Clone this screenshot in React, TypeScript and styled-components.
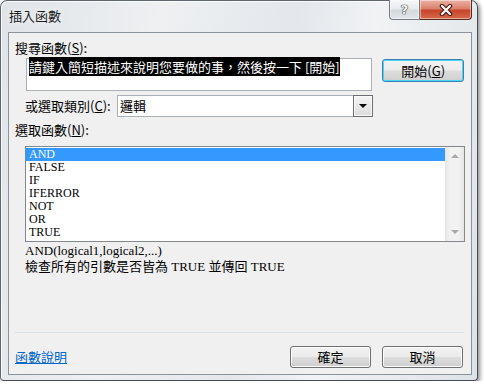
import React from "react";
import styled, { createGlobalStyle } from "styled-components";

const GlobalStyle = createGlobalStyle`
  html, body {
    margin: 0;
    padding: 0;
    background: #ffffff;
  }
  body {
    font-family: "Noto Sans CJK TC", "Liberation Sans", sans-serif;
    font-size: 12px;
    color: #000;
  }
  * {
    box-sizing: border-box;
  }
`;

const Window = styled.div`
  width: 478px;
  height: 381px;
  display: flex;
  flex-direction: column;
  padding: 0 5px 5px 7px;
  border: 1px solid #5f666e;
  border-right-color: #474c52;
  border-bottom-color: #474c52;
  border-radius: 7px 7px 4px 4px;
  background: linear-gradient(100deg, #e0e4e8 0%, #eef0f2 30%, #e3e7eb 55%, #f1f3f5 70%, #dde2e6 100%);
  box-shadow: 2px 2px 4px rgba(0, 0, 0, 0.45), inset 1px 1px 0 rgba(255, 255, 255, 0.8);
`;

const TitleBar = styled.div`
  height: 31px;
  display: flex;
  justify-content: space-between;
  align-items: flex-start;
`;

const Title = styled.div`
  margin-top: 7px;
  margin-left: 1px;
  font-size: 13px;
  line-height: 16px;
  color: #1c1c1c;
  text-shadow: 0 0 6px rgba(255, 255, 255, 0.9);
`;

const Caption = styled.div`
  display: flex;
  margin-top: -1px;
`;

const CaptionButton = styled.div<{ $close?: boolean }>`
  height: 20px;
  width: ${(p) => (p.$close ? "52px" : "31px")};
  display: flex;
  align-items: center;
  justify-content: center;
  border: 1px solid ${(p) => (p.$close ? "#5a2a22" : "#737b84")};
  border-top: none;
  border-left-width: ${(p) => (p.$close ? "0" : "1px")};
  border-radius: ${(p) => (p.$close ? "0 0 4px 0" : "0 0 0 4px")};
  background: ${(p) =>
    p.$close
      ? "linear-gradient(#eab3a6 0%, #dc806b 45%, #c8442c 55%, #d66a4a 100%)"
      : "linear-gradient(#f6f7f8 0%, #e8ebee 45%, #d4d9de 55%, #e3e7ea 100%)"};
  box-shadow: inset 0 0 0 1px rgba(255, 255, 255, 0.45);
  font-family: "DejaVu Sans", sans-serif;
  font-weight: bold;
  font-size: 13px;
  color: #f2f2f2;
  text-shadow: 0 0 1px #3a3f45, 0 0 1px #3a3f45, 0 0 1px #3a3f45;
`;

const Client = styled.div`
  flex: 1;
  display: flex;
  flex-direction: column;
  border: 1px solid #8c939a;
  background: #f0f0f0;
  padding: 7px 7px 6px 6px;
`;

const SectionLabel = styled.div<{ $top?: number }>`
  margin-top: ${(p) => p.$top ?? 0}px;
  font-size: 13px;
  line-height: 16px;
  height: 16px;
`;

const SearchRow = styled.div`
  display: flex;
  align-items: flex-start;
  gap: 10px;
  margin: 2px 0 0 11px;
`;

const SearchBox = styled.div`
  width: 348px;
  height: 33px;
  background: #fff;
  border: 1px solid #abb0b8;
  padding: 1px 2px;
  font-size: 13px;
  line-height: 14px;
`;

const Selected = styled.span`
  background: #000;
  color: #fff;
`;

const Button = styled.div<{ $focused?: boolean }>`
  width: ${(p) => (p.$focused ? "82px" : "81px")};
  height: ${(p) => (p.$focused ? "23px" : "22px")};
  margin-top: ${(p) => (p.$focused ? "1px" : "0")};
  display: flex;
  align-items: center;
  justify-content: center;
  border: 1px solid ${(p) => (p.$focused ? "#3c7fb1" : "#707070")};
  border-radius: 3px;
  background: linear-gradient(#f2f2f2 0%, #ebebeb 48%, #dddddd 52%, #cfcfcf 100%);
  box-shadow: inset 0 0 0 1px ${(p) => (p.$focused ? "#48d7f8" : "#fcfcfc")};
  font-size: 13px;
  line-height: 16px;
`;

const CategoryRow = styled.div`
  display: flex;
  align-items: center;
  margin: 4px 0 0 10px;
  height: 22px;
`;

const CategoryLabel = styled.div`
  width: 92px;
  font-size: 13px;
  line-height: 16px;
`;

const Select = styled.div`
  width: 256px;
  height: 22px;
  display: flex;
  align-items: stretch;
  background: #fff;
  border: 1px solid #abb0b8;
`;

const SelectValue = styled.div`
  flex: 1;
  padding-left: 2px;
  font-size: 13px;
  line-height: 20px;
`;

const DropButton = styled.div`
  width: 20px;
  display: flex;
  align-items: center;
  justify-content: center;
  border: 1px solid #6e6e6e;
  margin: -1px -1px -1px 0;
  background: linear-gradient(#f4f4f4, #dcdcdc);
  box-shadow: inset 0 0 0 1px #fafafa;
`;

const ListBox = styled.div`
  display: flex;
  width: 440px;
  height: 96px;
  margin: 8px 0 0 10px;
  border: 1px solid #828790;
  background: #fff;
`;

const Rows = styled.div`
  flex: 1;
  padding-top: 1px;
`;

const Row = styled.div<{ $selected?: boolean }>`
  height: 13px;
  padding-left: 3px;
  font-family: "Liberation Serif", serif;
  font-size: 12px;
  line-height: 13px;
  overflow: hidden;
  background: ${(p) => (p.$selected ? "#3399ff" : "transparent")};
  color: ${(p) => (p.$selected ? "#fff" : "#000")};
`;

const ScrollBar = styled.div`
  width: 19px;
  display: flex;
  flex-direction: column;
  justify-content: space-between;
  align-items: center;
  padding: 7px 0;
  background: linear-gradient(to right, #e6e6e6, #f2f2f2 30%, #f2f2f2 70%, #e6e6e6);
`;

const Arrow = styled.div<{ $down?: boolean; $color?: string }>`
  width: 0;
  height: 0;
  border-left: 4px solid transparent;
  border-right: 4px solid transparent;
  ${(p) =>
    p.$down
      ? `border-top: 4px solid ${p.$color ?? "#a8a8a8"};`
      : `border-bottom: 4px solid ${p.$color ?? "#a8a8a8"};`}
`;

const Description = styled.div`
  margin: 1px 0 0 10px;
  font-family: "Liberation Serif", "Noto Sans CJK TC", serif;
  font-size: 13px;
  line-height: 16px;
`;

const Spacer = styled.div`
  flex: 1;
`;

const Separator = styled.div`
  height: 1px;
  background: #d9dfe6;
`;

const Footer = styled.div`
  display: flex;
  align-items: center;
  height: 22px;
  margin: 13px 1px 0 0;
  gap: 11px;
`;

const HelpLink = styled.a`
  margin-right: auto;
  font-size: 13px;
  line-height: 16px;
  color: #0066cc;
  text-decoration: underline;
`;

const functions = ["AND", "FALSE", "IF", "IFERROR", "NOT", "OR", "TRUE"];

export default function App() {
  return (
    <>
      <GlobalStyle />
      <Window>
        <TitleBar>
          <Title>插入函數</Title>
          <Caption>
            <CaptionButton>?</CaptionButton>
            <CaptionButton $close>
              <svg width="16" height="12" viewBox="0 0 16 12">
                <path d="M4 2 L12 10 M12 2 L4 10" stroke="#4b1c14" strokeWidth="4.5" strokeLinecap="round" />
                <path d="M4 2 L12 10 M12 2 L4 10" stroke="#ffffff" strokeWidth="2.2" strokeLinecap="round" />
              </svg>
            </CaptionButton>
          </Caption>
        </TitleBar>
        <Client>
          <SectionLabel>
            搜尋函數(<u>S</u>):
          </SectionLabel>
          <SearchRow>
            <SearchBox>
              <Selected>請鍵入簡短描述來說明您要做的事，然後按一下 [開始]</Selected>
            </SearchBox>
            <Button $focused>
              開始(<u>G</u>)
            </Button>
          </SearchRow>
          <CategoryRow>
            <CategoryLabel>
              或選取類別(<u>C</u>):
            </CategoryLabel>
            <Select>
              <SelectValue>邏輯</SelectValue>
              <DropButton>
                <Arrow $down $color="#000" />
              </DropButton>
            </Select>
          </CategoryRow>
          <SectionLabel $top={5}>
            選取函數(<u>N</u>):
          </SectionLabel>
          <ListBox>
            <Rows>
              {functions.map((f, i) => (
                <Row key={f} $selected={i === 0}>
                  {f}
                </Row>
              ))}
            </Rows>
            <ScrollBar>
              <Arrow />
              <Arrow $down />
            </ScrollBar>
          </ListBox>
          <Description>
            AND(logical1,logical2,...)
            <br />
            檢查所有的引數是否皆為 TRUE 並傳回 TRUE
          </Description>
          <Spacer />
          <Separator />
          <Footer>
            <HelpLink href="#">函數說明</HelpLink>
            <Button>確定</Button>
            <Button>取消</Button>
          </Footer>
        </Client>
      </Window>
    </>
  );
}
